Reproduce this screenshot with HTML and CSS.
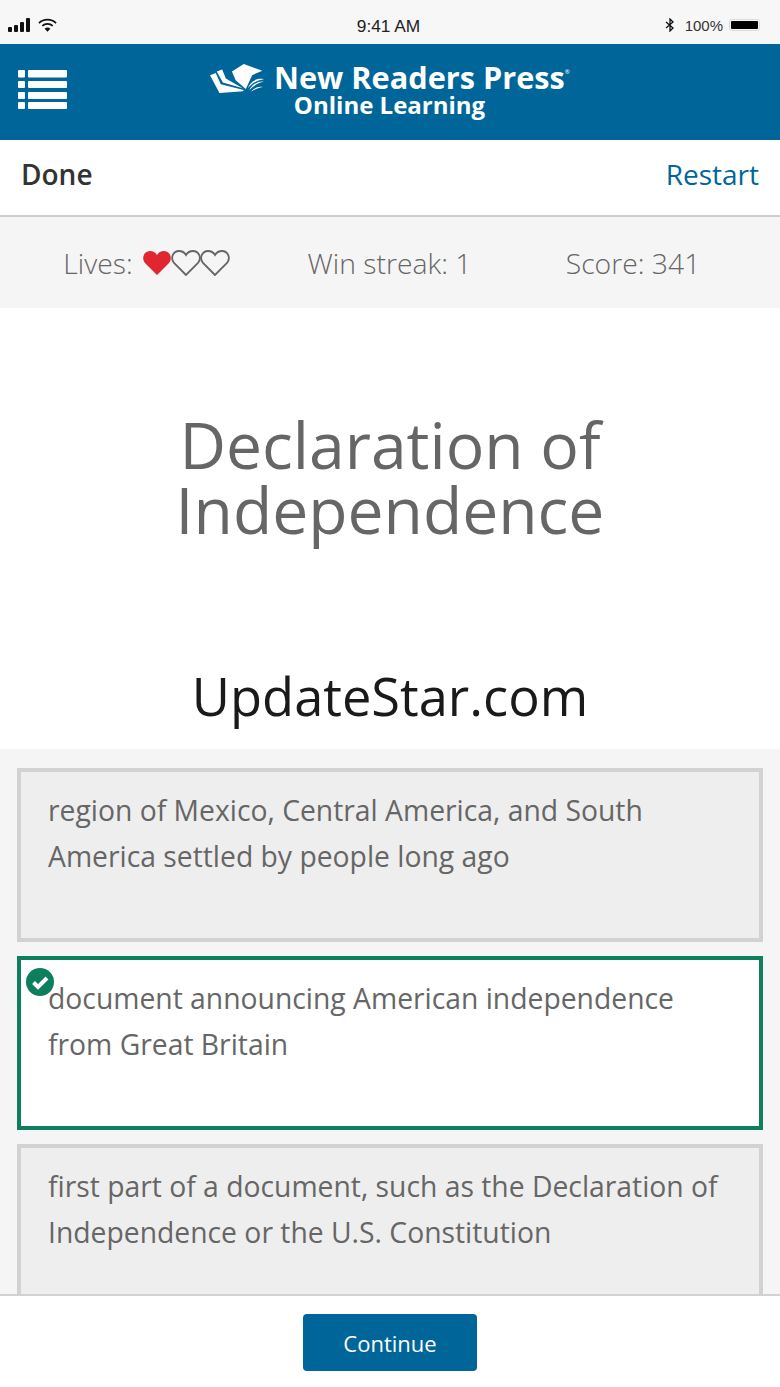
FILE: index.html
```html
<!DOCTYPE html>
<html lang="en">
<head>
<meta charset="utf-8">
<title>New Readers Press Online Learning</title>
<link rel="stylesheet" href="styles.css">
</head>
<body>
<div class="page">
  <div class="status">
    <div class="status-left">
      <svg class="signal" width="23" height="14" viewBox="0 0 23 14"><rect x="0" y="9" width="4" height="5" rx="1"/><rect x="6" y="7" width="4" height="7" rx="1"/><rect x="12" y="4" width="4" height="10" rx="1"/><rect x="18" y="0" width="4" height="14" rx="1"/></svg>
      <svg class="wifi" width="19" height="14" viewBox="0 0 20 14"><path d="M1 5 A13 13 0 0 1 19 5" fill="none" stroke="#111" stroke-width="1.8"/><path d="M4.5 8 A8 8 0 0 1 15.500 8" fill="none" stroke="#111" stroke-width="1.800"/><path d="M7 11 L10 14 L13 11 A4.500 4.500 0 0 0 7 11Z" fill="#111"/></svg>
    </div>
    <div class="status-time">9:41 AM</div>
    <div class="status-right">
      <svg class="bt" width="10" height="14" viewBox="0 0 10 14"><path d="M1 4 L8 10 L5 13 V1 L8 4 L1 10" fill="none" stroke="#111" stroke-width="1.300"/></svg>
      <span class="battery-text">100%</span>
      <span class="battery"><span class="battery-fill"></span></span>
    </div>
  </div>

  <header class="brand">
    <svg class="menu" width="50" height="40" viewBox="0 0 50 40" fill="#fff">
      <rect x="0" y="0" width="7" height="7.500" rx="1"/><rect x="10" y="0" width="39" height="7.500" rx="1"/>
      <rect x="0" y="11" width="7" height="7" rx="1"/><rect x="10" y="11" width="39" height="7" rx="1"/>
      <rect x="0" y="22" width="7" height="7" rx="1"/><rect x="10" y="22" width="39" height="7" rx="1"/>
      <rect x="0" y="32" width="7" height="7" rx="1"/><rect x="10" y="32" width="39" height="7" rx="1"/>
    </svg>
    <div class="logo">
      <svg class="logo-mark" width="54" height="29" viewBox="0 0 160 86" fill="#fff">
        <path d="M0 33 L17 27 L32 60 L100 77 L98 81 L28 86 Z"/>
        <path d="M20 22 L36 16 L47 43 L97 72 L38 55 Z"/>
        <path d="M65 22 L100 0 L155 20 L125 33 L106 74 L76 48 Z"/>
        <path d="M112 72 C118 56 134 40 160 45 C140 47 124 58 112 72Z"/>
        <path d="M116 78 C124 62 140 50 160 52 C142 56 128 66 116 78Z"/>
        <path d="M122 82 C132 70 144 66 156 68 C144 70 132 76 122 82Z"/>
      </svg>
      <div class="logo-text">
        <div class="logo-main">New Readers Press<sup class="reg">®</sup></div>
        <div class="logo-sub">Online Learning</div>
      </div>
    </div>
  </header>

  <div class="toolbar">
    <span class="done">Done</span>
    <span class="restart">Restart</span>
  </div>

  <div class="stats">
    <div class="stat lives"><span>Lives:</span>
      <span class="hearts">
        <svg width="30" height="26" viewBox="0 0 30 26"><path class="heart-full" d="M15 25 L3 13 C-1 8 2 1 8 1 C11 1 13.500 2.500 15 5 C16.500 2.500 19 1 22 1 C28 1 31 8 27 13Z"/></svg>
        <svg width="30" height="26" viewBox="0 0 30 26"><path class="heart-empty" d="M15 25 L3 13 C-1 8 2 1 8 1 C11 1 13.500 2.500 15 5 C16.500 2.500 19 1 22 1 C28 1 31 8 27 13Z"/></svg>
        <svg width="30" height="26" viewBox="0 0 30 26"><path class="heart-empty" d="M15 25 L3 13 C-1 8 2 1 8 1 C11 1 13.500 2.500 15 5 C16.500 2.500 19 1 22 1 C28 1 31 8 27 13Z"/></svg>
      </span>
    </div>
    <div class="stat">Win streak: 1</div>
    <div class="stat">Score: 341</div>
  </div>

  <div class="term">
    <h1 class="term-title">Declaration of Independence</h1>
    <div class="watermark">UpdateStar.com</div>
  </div>

  <div class="options">
    <div class="option">region of Mexico, Central America, and South America settled by people long ago</div>
    <div class="option correct">
      <svg class="check" width="28" height="28" viewBox="0 0 28 28"><circle cx="14" cy="14" r="14" fill="#0e7f5c"/><path d="M7.500 14.500 L12 19 L21 10" fill="none" stroke="#fff" stroke-width="4"/></svg>
      document announcing American independence from Great Britain</div>
    <div class="option">first part of a document, such as the Declaration of Independence or the U.S. Constitution</div>
  </div>

  <footer class="footer">
    <button class="continue" type="button">Continue</button>
  </footer>
</div>
</body>
</html>
```
FILE: styles.css
```css
* { box-sizing: border-box; }
html, body { margin: 0; padding: 0; }
body { font-family: "Open Sans", sans-serif; background: #fff; }
.page { width: 780px; height: 1387px; display: flex; flex-direction: column; overflow: hidden; }

.status { height: 44px; flex: none; background: #f7f7f7; display: flex; align-items: center; justify-content: space-between; padding: 6px 20px 0 8px; position: relative; font-family: "Liberation Sans", sans-serif; color: #222; font-size: 15px; }
.status-left { display: flex; align-items: center; gap: 7px; }
.signal { fill: #111; }
.status-time { position: absolute; left: 0; right: 0; top: 16px; text-align: center; font-size: 17.300px; padding-right: 3px; }
.status-right { display: flex; align-items: center; gap: 8px; }
.bt { margin-right: 2px; margin-left: -6px; }
.battery-text { font-size: 15px; color: #333; margin-right: -2px; }
.battery { width: 31px; height: 12px; border: 1px solid #ddd; border-radius: 3px; padding: 1px; display: block; }
.battery-fill { display: block; height: 100%; background: #000; border-radius: 1px; }

.brand { height: 96px; flex: none; background: #006699; position: relative; display: flex; align-items: center; justify-content: center; padding-bottom: 2px; }
.menu { position: absolute; left: 18px; top: 26px; }
.logo { display: flex; align-items: flex-start; color: #fff; }
.logo-mark { margin-top: 1px; margin-right: 10px; }
.logo-text { width: 296px; text-align: center; font-weight: 700; }
.logo-main { font-size: 30.700px; line-height: 28px; white-space: nowrap; text-align: left; }
.reg { font-size: 6px; font-weight: 400; vertical-align: 15px; line-height: 0; }
.logo-sub { font-size: 24px; line-height: 28px; padding-right: 65px; white-space: nowrap; }

.toolbar { height: 77px; flex: none; background: #fff; border-bottom: 2px solid #ccc; display: flex; align-items: center; justify-content: space-between; padding: 0 21px 8px 21px; }
.done { font-size: 28px; font-weight: 600; color: #333; }
.restart { font-size: 28px; color: #006699; }

.stats { height: 91px; flex: none; background: #f5f5f5; display: grid; grid-template-columns: 240px 247px 240px; align-items: center; padding: 0 27px 0 26px; color: #666; font-size: 28.300px; font-weight: 300; }
.stat { display: flex; align-items: center; justify-content: center; gap: 9px; white-space: nowrap; }
.hearts { display: flex; }
.hearts svg { margin-right: -1px; }
.heart-full { fill: #e0262e; }
.heart-empty { fill: none; stroke: #666; stroke-width: 1.800; }

.term { height: 441px; flex: none; background: #fff; text-align: center; display: flex; flex-direction: column; align-items: center; }
.term-title { margin: 104px 0 0; width: 520px; font-size: 64.200px; font-weight: 400; line-height: 65px; color: #666; }
.watermark { margin-top: 117px; font-size: 52.400px; line-height: 74px; color: #1a1a1a; }

.options { flex: 1; min-height: 0; background: #f5f5f5; padding: 19px 17px 0; display: flex; flex-direction: column; gap: 14px; overflow: hidden; }
.option { flex: none; height: 174px; background: #eee; border: 4px solid #d2d2d2; padding: 15px 27px; font-size: 28.300px; line-height: 46px; color: #666; position: relative; }
.correct { background: #fff; border-color: #0e7f5c; }
.check { position: absolute; left: 5px; top: 8px; }

.footer { height: 93px; flex: none; background: #fff; border-top: 2px solid #d2d2d2; display: flex; justify-content: center; align-items: center; padding-top: 2px; }
.continue { width: 174px; height: 57px; background: #006699; border: none; border-radius: 4px; color: #fff; font-family: "Open Sans", sans-serif; font-size: 22px; padding: 0; }
```
